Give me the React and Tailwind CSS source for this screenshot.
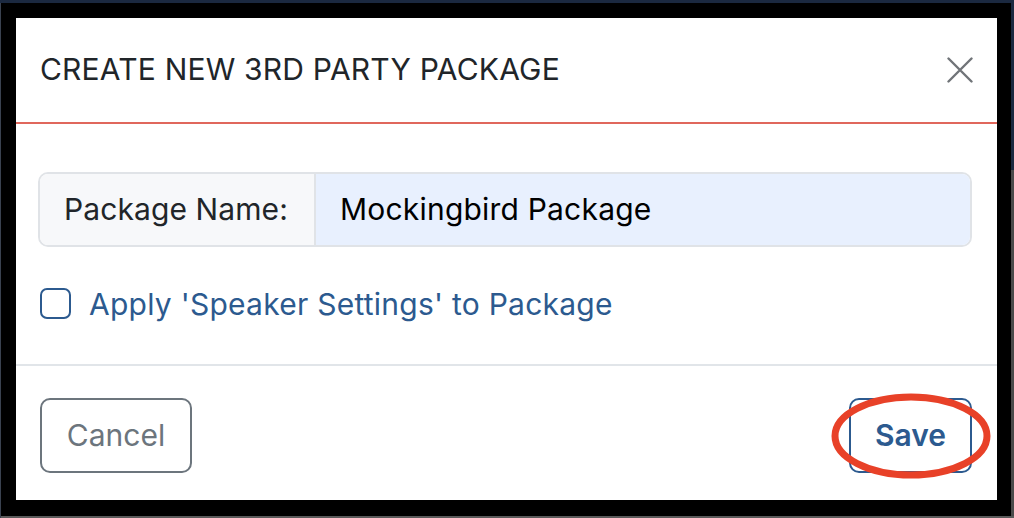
import React from "react";

export default function App() {
  return (
    <div
      className="relative w-[1014px] h-[518px] overflow-hidden bg-black"
      style={{ fontFamily: "Inter, 'Noto Sans', sans-serif" }}
    >
      {/* thin edges of the screen behind */}
      <div className="absolute left-0 top-0 w-full h-[3px] bg-[#1b2940]" />
      <div className="absolute right-0 top-0 w-[3px] h-[170px] bg-[#1b2940]" />
      <div className="absolute right-0 top-[170px] w-[3px] h-[348px] bg-[#4a4a4a]" />
      <div className="absolute left-0 bottom-0 w-full h-[2px] bg-[#5a5a5a]" />
      <div className="absolute left-0 top-[3px] w-[1px] h-[515px] bg-[#3a4250]" />

      <div className="pt-[18px] pl-[16px]">
        <div className="w-[981px] h-[482px] bg-white flex flex-col">
          {/* header */}
          <div className="h-[106px] shrink-0 flex items-center justify-between pl-[24px] pr-[24px] border-b-2 border-[#e0675c]">
            <h1 className="text-[30px] leading-none text-[#212529] tracking-[0.2px] pb-[2px]">
              CREATE NEW 3RD PARTY PACKAGE
            </h1>
            <svg width="26" height="26" viewBox="0 0 26 26">
              <path d="M1.5 1.5 L24.5 24.5 M24.5 1.5 L1.5 24.5" stroke="#707478" strokeWidth="2.4" strokeLinecap="round" />
            </svg>
          </div>

          {/* body */}
          <div className="pt-[48px] pl-[22px] pr-[25px] pb-[45px] border-b-2 border-[#e1e5e9]">
            <div className="flex h-[75px] rounded-[10px] border-2 border-[#e0e3e7] overflow-hidden">
              <div className="w-[276px] shrink-0 bg-[#f7f8fa] border-r-2 border-[#e0e3e7] flex items-center pl-[24px] text-[30px] text-[#212529] tracking-[0.1px]">
                Package Name:
              </div>
              <div className="flex-1 bg-[#e8f0fe] flex items-center pl-[24px] text-[30px] text-black tracking-[0.2px]">
                Mockingbird Package
              </div>
            </div>
            <div className="flex items-center mt-[41px] pl-[2px] h-[31px]">
              <div className="w-[31px] h-[31px] rounded-[7px] border-2 border-[#2c5a8f] bg-white" />
              <span className="ml-[18px] text-[30px] text-[#2c5a8f] leading-none tracking-[0.25px]">
                Apply 'Speaker Settings' to Package
              </span>
            </div>
          </div>

          {/* footer */}
          <div className="flex justify-between pt-[32px] pl-[24px] pr-[25px]">
            <button className="w-[152px] h-[75px] rounded-[10px] border-2 border-[#6c757d] text-[30px] text-[#6c757d] bg-white">
              Cancel
            </button>
            <button className="w-[123px] h-[75px] rounded-[10px] border-2 border-[#2c5a8f] text-[30px] font-semibold text-[#2c5a8f] bg-white">
              Save
            </button>
          </div>
        </div>
      </div>

      {/* red annotation ellipse */}
      <svg className="absolute left-[830px] top-[390px]" width="162" height="90" viewBox="0 0 162 90">
        <ellipse cx="81" cy="46" rx="76" ry="39" fill="none" stroke="#e84128" strokeWidth="7" />
      </svg>
    </div>
  );
}
